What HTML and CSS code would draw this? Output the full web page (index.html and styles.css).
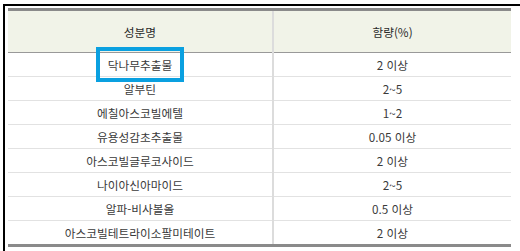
FILE: index.html
```html
<!DOCTYPE html>
<html lang="ko">
<head>
<meta charset="utf-8">
<link rel="stylesheet" href="styles.css">
</head>
<body>
<div class="frame">
  <table class="tbl">
    <thead>
      <tr><th class="c1">성분명</th><th>함량(%)</th></tr>
    </thead>
    <tbody>
      <tr><td class="c1"><span class="hl">닥나무추출물</span></td><td>2 이상</td></tr>
      <tr><td class="c1">알부틴</td><td>2~5</td></tr>
      <tr><td class="c1">에칠아스코빌에텔</td><td>1~2</td></tr>
      <tr><td class="c1">유용성감초추출물</td><td>0.05 이상</td></tr>
      <tr><td class="c1">아스코빌글루코사이드</td><td>2 이상</td></tr>
      <tr><td class="c1">나이아신아마이드</td><td>2~5</td></tr>
      <tr><td class="c1">알파-비사볼올</td><td>0.5 이상</td></tr>
      <tr><td class="c1">아스코빌테트라이소팔미테이트</td><td>2 이상</td></tr>
    </tbody>
  </table>
</div>
</body>
</html>
```
FILE: styles.css
```css
html, body {
  margin: 0;
  padding: 0;
  background: #fff;
}
body {
  font-family: "Noto Sans CJK KR", "Noto Sans", sans-serif;
  font-size: 11.7px;
  color: #3a3a3a;
}
.frame {
  margin: 4px 0 0 3px;
  width: 510px;
  height: 243px;
  border: 2px solid #000;
  padding: 2px 4px 0 3px;
  box-sizing: content-box;
}
.tbl {
  width: 503px;
  border-collapse: collapse;
  border-top: 3px solid #8a8a8a;
  border-bottom: 3px solid #8a8a8a;
}
.tbl th {
  background: #f1f3e8;
  height: 41px;
  font-weight: normal;
  color: #2a2a2a;
  border-bottom: 1px solid #999;
  padding: 0;
  text-align: center;
}
.tbl td {
  height: 23px;
  padding: 0;
  text-align: center;
  border-bottom: 1px solid #e2e2e2;
  line-height: 14px;
}
.tbl tbody tr:last-child td {
  border-bottom: 3px solid #8a8a8a;
}
.c1 {
  width: 264px;
  border-right: 2px solid #dcdcdc;
}
.hl {
  position: relative;
}
.hl::after {
  content: "";
  position: absolute;
  left: -12px;
  right: -12px;
  top: -9px;
  bottom: -9px;
  border: 4px solid #0aa0e0;
}
```
